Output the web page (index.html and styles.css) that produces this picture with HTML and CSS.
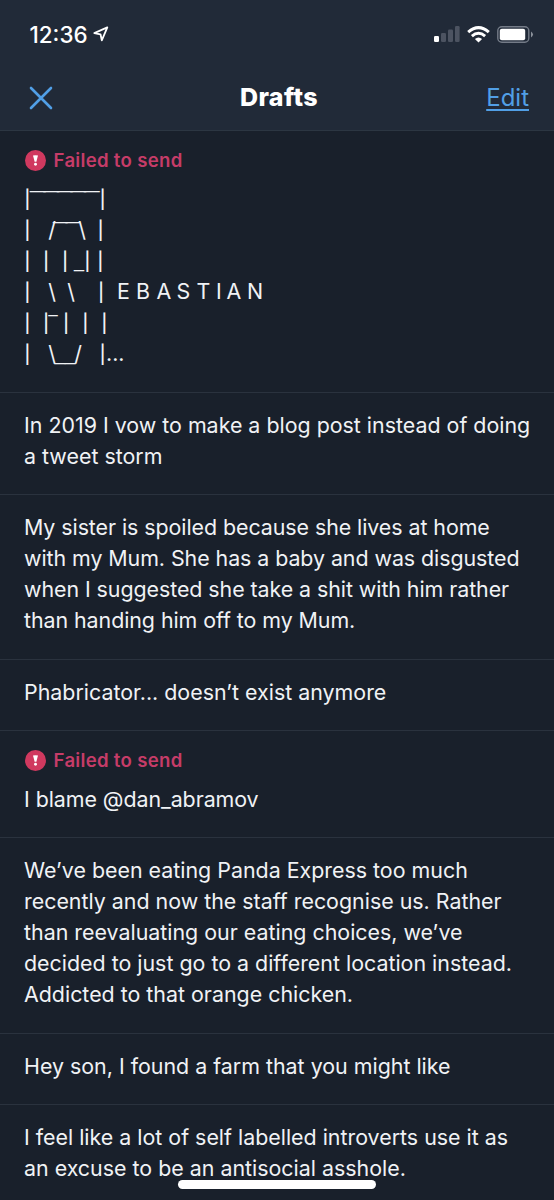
FILE: index.html
```
<!DOCTYPE html>
<html lang="en">
<head>
<meta charset="utf-8">
<title>Drafts</title>
<link rel="stylesheet" href="styles.css">
</head>
<body>
<header class="header">
  <div class="status">
    <span class="time">12:36</span>
    <svg class="location" width="16" height="16" viewBox="0 0 16 16"><path d="M14.3 1.4 1.3 7.1 7.5 8.3 8.8 14.4Z"/></svg>
    <svg class="signal" width="26" height="17" viewBox="0 0 26 17"><rect x="0" y="10" width="5" height="6" rx="1.2" fill="#fff"/><g fill="#4c5361"><rect x="7" y="7" width="5" height="9" rx="1.2"/><rect x="14" y="3.5" width="5" height="12.5" rx="1.2"/><rect x="21" y="0" width="4.6" height="16" rx="1.2"/></g></svg>
    <svg class="wifi" width="23" height="17" viewBox="0 0 23 17"><g fill="none" stroke="#fff" stroke-width="3"><path d="M1.2 6.1Q11.5-2.9 21.8 6.1"/><path d="M4.9 10.1Q11.5 4.3 18.1 10.1"/></g><path d="M7.9 13Q11.5 10 15.1 13L11.5 16.6Z" fill="#fff"/></svg>
    <svg class="battery" width="37" height="17" viewBox="0 0 37 17"><rect x=".8" y=".8" width="31" height="15.4" rx="4" fill="none" stroke="#747b87" stroke-width="1.4"/><rect x="2.8" y="2.8" width="25.4" height="11.4" rx="2" fill="#fff"/><path d="M34 5.5Q38 8.5 34 11.5Z" fill="#8c929b"/></svg>
  </div>
  <div class="nav">
    <svg class="close" width="24" height="24" viewBox="0 0 24 24"><path d="M2 2 22 22M22 2 2 22"/></svg>
    <h1 class="title">Drafts</h1>
    <a class="edit">Edit</a>
  </div>
</header>
<main class="list">
  <article class="item art-item">
    <div class="failed"><svg width="21" height="21" viewBox="0 0 22 22"><circle cx="11" cy="11" r="11" fill="#d0395f"/><path d="M8.4 5.8Q11 5.3 13.6 5.8L11.9 12.2H10.1Z" fill="#fff"/><circle cx="11" cy="14.9" r="1.5" fill="#fff"/></svg><span>Failed to send</span></div>
    <svg class="art" width="300" height="192" viewBox="0 0 300 192">
      <g class="bars">
        <text x="3.3 78.7" y="22">||</text>
        <text x="3.3 76.7" y="53">||</text>
        <text x="3.3 22 41 63.3 76.3" y="84">|||||</text>
        <text x="3.3 77" y="115">||</text>
        <text x="3.3 22 42 61.3 80.3" y="146">|||||</text>
        <text x="3.3 78.7" y="177">||</text>
      </g>
      <g class="slashes">
        <text x="28" y="53">/</text><text x="58" y="53">\</text>
        <text x="28 47" y="115">\\</text>
        <text x="28" y="177">\</text><text x="54" y="177">/</text>
      </g>
      <g class="rules">
        <text x="7" y="25" textLength="67.5" lengthAdjust="spacingAndGlyphs">‾‾‾‾‾</text>
        <text x="30" y="56" textLength="25" lengthAdjust="spacingAndGlyphs">‾‾</text>
        <text x="50" y="82.5" textLength="10" lengthAdjust="spacingAndGlyphs">_</text>
        <text x="25" y="149" textLength="8" lengthAdjust="spacingAndGlyphs">‾</text>
        <text x="30.5" y="175.5" textLength="21" lengthAdjust="spacingAndGlyphs">__</text>
      </g>
      <text x="93 112 132.5 152.5 172.5 192 202.5 223" y="115">EBASTIAN</text>
      <text x="82" y="177">...</text>
    </svg>
  </article>
  <article class="item">In 2019 I vow to make a blog post instead of doing<br>a tweet storm</article>
  <article class="item snug">My sister is spoiled because she lives at home<br>with my Mum. She has a baby and was disgusted<br>when I suggested she take a shit with him rather<br>than handing him off to my Mum.</article>
  <article class="item">Phabricator... doesn’t exist anymore</article>
  <article class="item blame snug">
    <div class="failed"><svg width="21" height="21" viewBox="0 0 22 22"><circle cx="11" cy="11" r="11" fill="#d0395f"/><path d="M8.4 5.8Q11 5.3 13.6 5.8L11.9 12.2H10.1Z" fill="#fff"/><circle cx="11" cy="14.9" r="1.5" fill="#fff"/></svg><span>Failed to send</span></div>
    <div>I blame @dan_abramov</div>
  </article>
  <article class="item">We’ve been eating Panda Express too much<br>recently and now the staff recognise us. Rather<br>than reevaluating our eating choices, we’ve<br>decided to just go to a different location instead.<br>Addicted to that orange chicken.</article>
  <article class="item">Hey son, I found a farm that you might like</article>
  <article class="item last">I feel like a lot of self labelled introverts use it as<br>an excuse to be an antisocial asshole.</article>
</main>
<div class="home-indicator"></div>
</body>
</html>
```
FILE: styles.css
```
* { box-sizing: border-box; }
body { margin: 0; height: 1200px; overflow: hidden; position: relative; background: #19202b; color: #f0f2f5; font-family: Inter, "Liberation Sans", sans-serif; font-size: 21.4px; line-height: 31px; }
svg { display: block; flex: none; }
.header { height: 131px; background: #212a38; border-bottom: 1px solid #2c3642; }
.status { height: 68px; display: flex; align-items: center; padding: 0 20px 0 29.5px; color: #fff; }
.time { font-size: 22.4px; font-weight: 500; width: 63.5px; white-space: nowrap; }
.location { fill: none; stroke: #fff; stroke-width: 1.8; stroke-linejoin: round; }
.signal { margin-left: auto; }
.wifi { margin-left: 7px; }
.battery { margin-left: 7px; }
.nav { height: 58px; display: grid; grid-template-columns: 1fr auto 1fr; align-items: center; padding: 0 25px 0 29px; }
.close { margin-top: 1px; stroke: #519fe6; stroke-width: 2.6; stroke-linecap: round; fill: none; }
.title { margin: 0; color: #fff; font-size: 25px; font-weight: 800; letter-spacing: .4px; }
.edit { justify-self: end; color: #519fe6; font-size: 24px; text-decoration: underline; text-decoration-thickness: 1.5px; text-underline-offset: 3px; }
.item { padding: 17px 0 22.4px 24px; border-bottom: 1px solid #2a323e; white-space: nowrap; }
.art-item { height: 262px; padding-top: 14px; }
.snug { letter-spacing: -.06px; }
.blame { height: 107px; padding-top: 14px; }
.last { border-bottom: 0; }
.failed { display: flex; align-items: center; gap: 7.5px; padding-left: 1px; height: 31px; margin-bottom: 8px; color: #c63c68; font-size: 18.6px; font-weight: 600; letter-spacing: .3px; }
.art { fill: #f0f2f5; }
.bars, .slashes { text-anchor: middle; }
.bars { font-size: 18px; font-weight: 500; }
.rules { font-family: "Liberation Sans", sans-serif; }
.home-indicator { position: absolute; left: 178px; top: 1180px; width: 198px; height: 9px; border-radius: 5px; background: #fff; }
```
